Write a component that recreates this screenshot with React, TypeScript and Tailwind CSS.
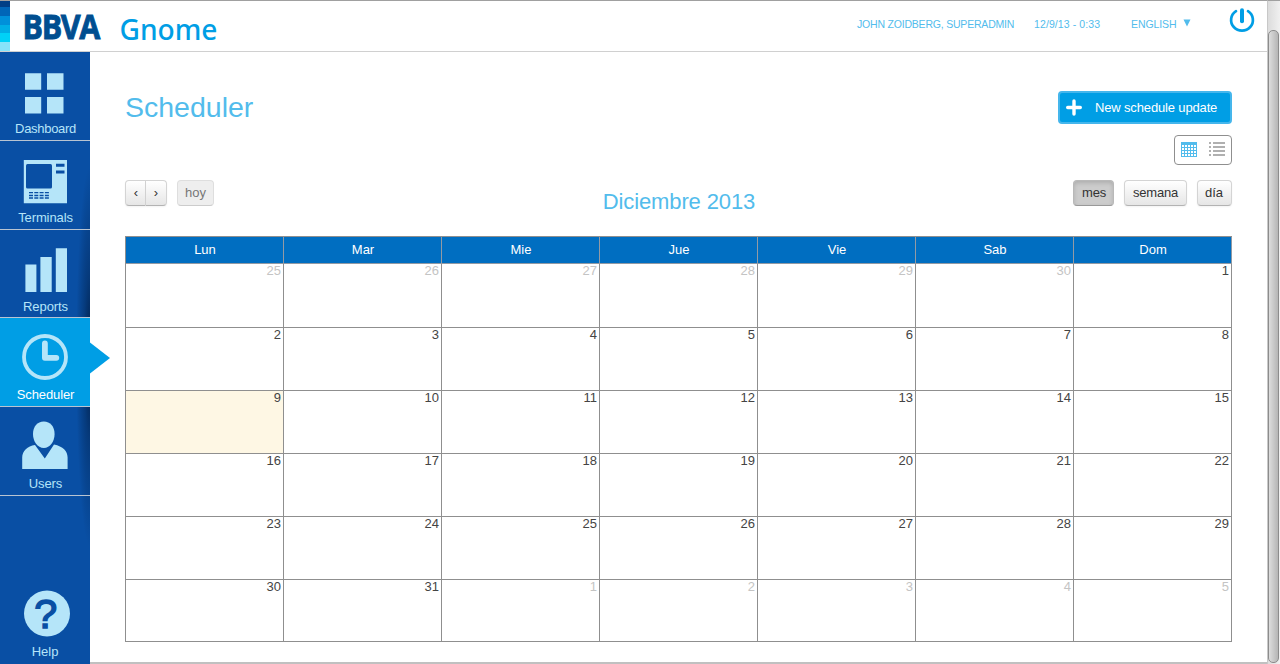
import React from "react";

type DayCell = { day: number; muted?: boolean; today?: boolean };

const WEEKDAYS = ["Lun", "Mar", "Mie", "Jue", "Vie", "Sab", "Dom"];

const CELLS: DayCell[] = Array.from({ length: 42 }, (_, i) => {
  if (i < 6) return { day: 25 + i, muted: true };
  if (i > 36) return { day: i - 36, muted: true };
  return { day: i - 5, today: i === 14 };
});

const STRIPES = ["bg-[#003f86] h-[6px]", "bg-[#0066b8] h-[9px]", "bg-[#0090da] h-[9px]", "bg-[#00aee6] h-[9px]", "bg-[#00d1f7] h-[9px]", "bg-[#86e3fa] h-[9px]"];

function DashboardIcon() {
  return (
    <svg width="46" height="46" viewBox="0 0 46 46" fill="#b5e5f9">
      <path d="M3 1.300h16.200v16.500H3zM25 1.300h16.500v16.500H25zM3 25h16.200v16.500H3zM25 25h16.500v16.500H25z" />
    </svg>
  );
}

function TerminalIcon() {
  return (
    <svg width="46" height="46" viewBox="0 0 46 46">
      <path d="M1.800 1H45v43.200H1.800z" fill="#b5e5f9" />
      <rect x="4" y="5" width="26" height="24.500" rx="1.500" fill="#094fa4" />
      <path d="M34 4.700h8.500v3H34zM34 11.400h8.500v3H34z" fill="#094fa4" />
      <path d="M7 33.700h20M7 36.500h20M7 39h20" stroke="#094fa4" strokeWidth="1.300" strokeDasharray="4 1.300" />
    </svg>
  );
}

function ReportsIcon() {
  return (
    <svg width="46" height="46" viewBox="0 0 46 46" fill="#b5e5f9">
      <path d="M3.400 17.500h11V45h-11zM18.400 10h11.300v35H18.400zM33.800 1.300H45V45H33.800z" />
    </svg>
  );
}

function ClockIcon() {
  return (
    <svg width="46" height="46" viewBox="0 0 46 46" fill="none" stroke="#b5e5f9">
      <circle cx="23" cy="23" r="21" strokeWidth="3.800" />
      <path d="M22.900 9.400v14.400h11.400" strokeWidth="5.800" strokeLinecap="round" strokeLinejoin="round" />
    </svg>
  );
}

function UserIcon() {
  return (
    <svg width="46" height="48" viewBox="0 0 46 48" fill="#b5e5f9">
      <path d="M21.800.5c6.500 0 10.800 5 10.800 12.500 0 7.500-4.500 14-10.800 14S11 20.500 11 13C11 5.500 15.300.5 21.800.5z" />
      <path d="M13 24l9.800 13.500L32 23.500c9 2 13.600 6.500 13.600 13v11.400H.2V36.500C.2 30 5.500 25 13 24z" />
    </svg>
  );
}

function HelpIcon() {
  return (
    <svg width="46" height="47" viewBox="0 0 46 47">
      <circle cx="23" cy="23.500" r="23" fill="#b5e5f9" />
      <text x="10.300" y="38" textLength="23" lengthAdjust="spacingAndGlyphs" fontFamily="Liberation Sans, sans-serif" fontWeight="400" fontSize="41" fill="#094fa4" stroke="#094fa4" strokeWidth="1.500">?</text>
    </svg>
  );
}

const NAV = [
  { label: "Dashboard", icon: <DashboardIcon />, box: "h-[89px] pt-[20px] pb-[3px]" },
  { label: "Terminals", icon: <TerminalIcon />, box: "h-[89px] pt-[18px] pb-[3px]" },
  { label: "Reports", icon: <ReportsIcon />, box: "h-[88px] pt-[17px] pb-[2px]" },
  { label: "Scheduler", icon: <ClockIcon />, box: "h-[89px] pt-[16px] pb-[3px]", active: true },
  { label: "Users", icon: <UserIcon />, box: "h-[89px] pt-[14px] pb-[3px]" },
];

function Header() {
  return (
    <header className="flex h-[52px] shrink-0 border-t border-b border-t-[#a0a0a0] border-b-[#d0d0d0] bg-white">
      <div className="flex w-[10px] flex-col">
        {STRIPES.map((s) => (
          <div key={s} className={s} />
        ))}
      </div>
      <svg width="220" height="50" viewBox="10 1 220 50">
        <text x="22.500" y="39" textLength="76.500" lengthAdjust="spacingAndGlyphs" letterSpacing="-1.500" fontFamily="Open Sans, sans-serif" fontWeight="700" fontSize="34.500" fill="#004e90" stroke="#004e90" strokeWidth="0.900">BBVA</text>
        <text x="119.500" y="39.500" textLength="98" lengthAdjust="spacingAndGlyphs" fontFamily="Noto Sans, sans-serif" fontWeight="500" fontSize="28" fill="#009ee5">Gnome</text>
      </svg>
      <div className="ml-auto flex pr-[12px] text-[10.5px] leading-[46px] whitespace-nowrap text-[#52bcec]">
        <span className="w-[177px] tracking-[-0.2px]">JOHN ZOIDBERG, SUPERADMIN</span>
        <span className="w-[97px] tracking-[0.1px]">12/9/13 - 0:33</span>
        <span className="w-[52px] tracking-[-0.1px]">ENGLISH</span>
        <svg width="8" height="8" viewBox="0 0 8 8" className="mt-[18px] mr-[38px]">
          <path d="M.5.5h7L4 7.500z" fill="#52bcec" />
        </svg>
        <svg width="26" height="26" viewBox="0 0 26 26" className="mt-[6px]" fill="none" stroke="#009ee5" strokeLinecap="round">
          <path d="M7 4.200a10.900 10.600 0 1 0 12 0" strokeWidth="2.700" />
          <path d="M13 3.300v11" strokeWidth="4" />
        </svg>
      </div>
    </header>
  );
}

function Sidebar() {
  return (
    <nav className="relative flex w-[90px] shrink-0 flex-col bg-[#094fa4] bg-[radial-gradient(ellipse_14px_190px_at_100%_305px,rgba(0,20,50,0.8),rgba(0,20,50,0.35)_45%,transparent)] text-[13px] leading-[16px] text-[#b5e5f9]">
      {NAV.map((n) => (
        <a
          key={n.label}
          className={`${n.box} relative flex flex-col items-center justify-between border-b border-[#b8c4d2] ${n.active ? "bg-[#009ee5] text-white" : ""}`}
        >
          {n.icon}
          <span className={`pl-px ${n.label === "Dashboard" ? "tracking-[-0.3px]" : "tracking-[-0.1px]"}`}>{n.label}</span>
          {n.active && (
            <svg width="21" height="32" viewBox="0 0 21 32" className="absolute top-[24px] left-[90px]">
              <path d="M0 .500L20 16 0 31.500z" fill="#009ee5" />
            </svg>
          )}
        </a>
      ))}
      <a className="mt-auto flex h-[74px] flex-col items-center justify-between pb-[4px]">
        <span className="pl-[3px]"><HelpIcon /></span>
        Help
      </a>
    </nav>
  );
}

const BTN = "flex h-[26px] items-center justify-center border border-[#d4d4d4] border-b-[#b3b3b3] bg-linear-to-b from-white to-[#e6e6e6] text-[#333] shadow-[0_1px_2px_rgba(0,0,0,0.05)]";

function Toolbar() {
  return (
    <div className="mt-[15px] grid h-[56px] grid-cols-[1fr_auto_1fr] items-start text-[13px]">
      <div className="flex">
        <button className={`${BTN} w-[21px] rounded-l-[4px] border-r-[#d4d4d4] pl-px`}>‹</button>
        <button className={`${BTN} w-[21px] rounded-r-[4px] border-l-0`}>›</button>
        <button className="ml-[10px] flex h-[26px] w-[37px] items-center justify-center rounded-[4px] border border-[#dedede] border-b-[#cccccc] bg-[#eeeeee] text-[#777]">hoy</button>
      </div>
      <h2 className="mt-[9px] pl-px text-[22px] leading-[26px] tracking-[-0.12px] text-[#52bcec]">Diciembre 2013</h2>
      <div className="flex justify-end gap-[10px]">
        <button className="flex h-[26px] w-[41px] items-center justify-center rounded-[4px] border border-[#b9b9b9] border-b-[#999] bg-[#cccccc] pl-px tracking-[-0.2px] text-[#333] shadow-[inset_0_2px_4px_rgba(0,0,0,0.15)]">mes</button>
        <button className={`${BTN} w-[63px] rounded-[4px] tracking-[-0.2px]`}>semana</button>
        <button className={`${BTN} w-[35px] rounded-[4px] pr-px`}>día</button>
      </div>
    </div>
  );
}

function Calendar() {
  return (
    <div className="grid h-[406px] shrink-0 grid-cols-[158px_158px_158px_158px_158px_158px_158px] grid-rows-[27px_64px_63px_63px_63px_63px_62px] border-t border-l border-[#8f8f8f] text-[13px] leading-[13px]">
      {WEEKDAYS.map((d) => (
        <div key={d} className="border-r border-b border-[#929aa4] bg-[#006ec1] pl-px text-center leading-[26px] text-white">{d}</div>
      ))}
      {CELLS.map((c, i) => (
        <div
          key={i}
          className={`border-r border-b border-[#8f8f8f] pr-[2px] text-right ${c.muted ? "text-[#c4c4c4]" : "text-[#444]"} ${c.today ? "bg-[#fef7e4]" : ""}`}
        >
          {c.day}
        </div>
      ))}
    </div>
  );
}

function ViewSwitch() {
  return (
    <div className="mt-[11px] ml-auto flex h-[30px] w-[58px] rounded-[4px] border border-[#8f8f8f] pt-[6px] pl-[6px]">
      <svg width="16" height="15" viewBox="0 0 16 15" shapeRendering="crispEdges">
        <path d="M0 0h16v15H0z" fill="#52bcec" />
        {[3, 6, 9, 12].map((y) => [1, 4, 7, 10, 13].map((x) => <rect key={`${x}-${y}`} x={x} y={y} width="2" height="2" fill="#fff" />))}
      </svg>
      <svg width="16" height="15" viewBox="0 0 16 15" className="ml-[12px]" shapeRendering="crispEdges" fill="#b0b0b0">
        <path d="M0 0h2v2H0zM4 0h12v2H4zM0 4h2v2H0zM4 4h12v2H4zM0 8h2v2H0zM4 8h12v2H4zM0 12h2v2H0zM4 12h12v2H4z" />
      </svg>
    </div>
  );
}

export default function App() {
  return (
    <div className="flex h-[664px] w-[1280px] overflow-hidden bg-white font-['Liberation_Sans',sans-serif]">
      <div className="flex w-[1267px] flex-col">
        <Header />
        <div className="flex flex-1">
          <Sidebar />
          <main className="flex flex-1 flex-col border-b-2 border-[#c0c0c0] px-[35px] pt-[39px]">
            <div className="flex h-[33px] items-center justify-between">
              <h1 className="text-[28.500px] leading-[33px] text-[#52bcec]">Scheduler</h1>
              <button className="flex h-[33px] w-[174px] items-center rounded-[4px] border-2 border-[#45b6ec] bg-[#009ee5] pl-[6px] text-[13px] whitespace-nowrap text-white">
                <svg width="16" height="17" viewBox="0 0 16 17" stroke="#fff" strokeWidth="3.400" strokeLinecap="round">
                  <path d="M8 2v13M1.700 8.500h12.600" />
                </svg>
                <span className="ml-[13px] tracking-[-0.15px]">New schedule update</span>
              </button>
            </div>
            <ViewSwitch />
            <Toolbar />
            <Calendar />
          </main>
        </div>
      </div>
      <div className="flex w-[13px] flex-col border-t border-l border-t-[#a0a0a0] border-l-[#c8c8c8] bg-linear-to-r from-[#dcdcdc] to-[#f0f0f0] pt-[29px]">
        <div className="h-[633px] w-[11px] rounded-[5px] border border-[#8c8c8c] bg-linear-to-r from-[#dddddd] to-[#b5b5b5]" />
      </div>
    </div>
  );
}
